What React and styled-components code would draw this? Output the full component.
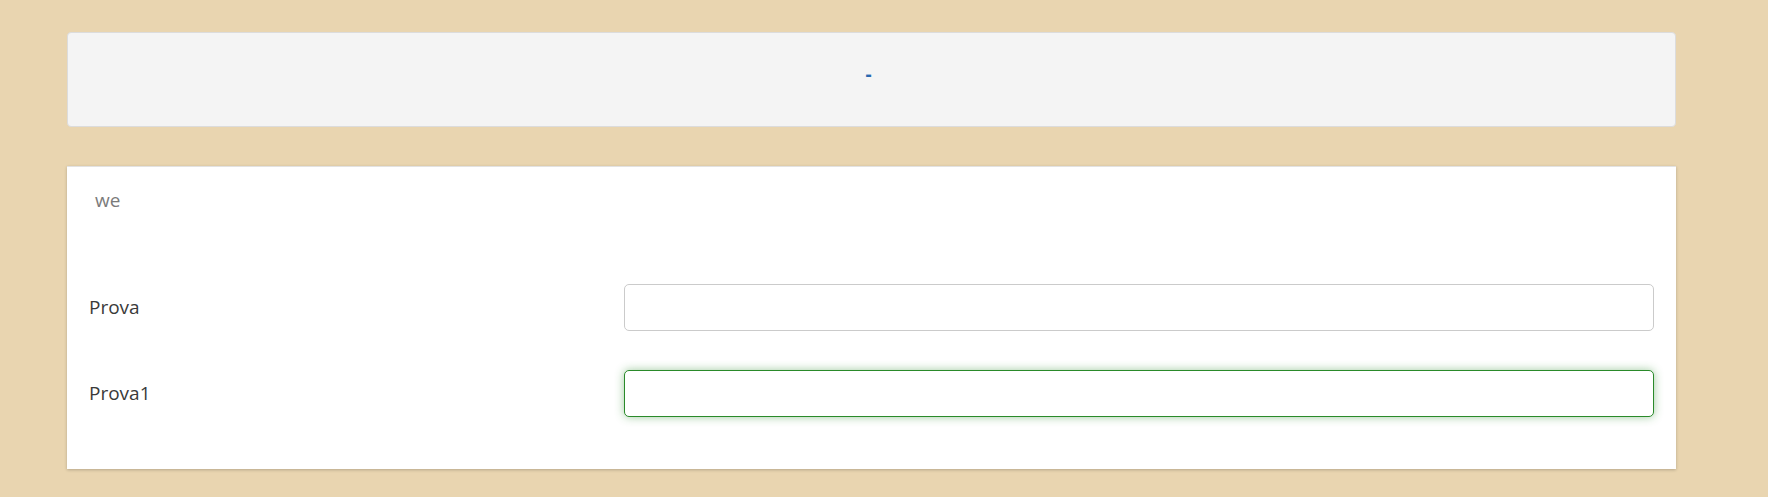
import React from "react";
import styled, { createGlobalStyle } from "styled-components";

const GlobalStyle = createGlobalStyle`
  html, body {
    margin: 0;
    padding: 0;
    background: #e9d5b0;
    font-family: "Open Sans", "Liberation Sans", sans-serif;
  }
`;

const Page = styled.div`
  display: flex;
  flex-direction: column;
  gap: 39px;
  padding: 32px 92px 28px 67px;
  min-height: 497px;
  box-sizing: border-box;
`;

const HeaderBox = styled.div`
  height: 95px;
  box-sizing: border-box;
  background: #f4f4f4;
  border: 1px solid #dcdcdc;
  border-radius: 4px;
  display: flex;
  justify-content: center;
  align-items: center;
  padding-bottom: 12px;
`;

const HeaderLink = styled.span`
  color: #2a68b0;
  font-size: 19px;
  font-weight: 700;
  line-height: 26px;
  margin-right: 6px;
`;

const Card = styled.div`
  background: #fff;
  border-top: 1px solid #e2e2e2;
  box-shadow: 0 1px 3px rgba(0, 0, 0, 0.22);
  padding: 20px 22px 52px;
`;

const CardTitle = styled.div`
  color: #7b7b7b;
  font-size: 19px;
  line-height: 26px;
  padding-left: 6px;
  margin-bottom: 71px;
`;

const Form = styled.div`
  display: flex;
  flex-direction: column;
  gap: 39px;
`;

const Row = styled.div`
  display: grid;
  grid-template-columns: 535px 1fr;
  align-items: center;
`;

const Label = styled.label`
  color: #3a3a3a;
  font-size: 19px;
  line-height: 26px;
  margin-top: -2px;
`;

const Input = styled.input`
  height: 47px;
  box-sizing: border-box;
  border: 1px solid ${(p) => (p.$focused ? "#2a8a2a" : "#cbcbcb")};
  border-radius: 5px;
  background: #fff;
  outline: none;
  font-family: inherit;
  font-size: 19px;
  padding: 0 12px;
  box-shadow: ${(p) => (p.$focused ? "0 0 10px rgba(42, 138, 42, 0.45)" : "none")};
`;

export default function App() {
  return (
    <>
      <GlobalStyle />
      <Page>
        <HeaderBox>
          <HeaderLink>-</HeaderLink>
        </HeaderBox>
        <Card>
          <CardTitle>we</CardTitle>
          <Form>
            <Row>
              <Label>Prova</Label>
              <Input type="text" />
            </Row>
            <Row>
              <Label>Prova1</Label>
              <Input type="text" $focused />
            </Row>
          </Form>
        </Card>
      </Page>
    </>
  );
}
